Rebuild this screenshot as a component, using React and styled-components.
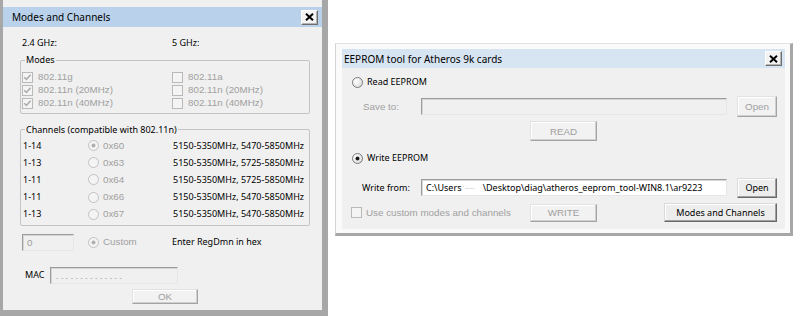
import React from "react";
import styled, { createGlobalStyle } from "styled-components";

const UI = `"Noto Sans", "Open Sans", sans-serif`;
const CLASSIC = `"Liberation Sans", Arial, sans-serif`;
const GRAY = "#a0a0a0";

const GlobalStyle = createGlobalStyle`
  html, body { margin: 0; padding: 0; background: #fff; }
  body { font-family: ${UI}; color: #000; }
  * { box-sizing: border-box; }
`;

const Page = styled.div`
  display: flex;
  align-items: flex-start;
  width: 800px;
  height: 325px;
  overflow: hidden;
`;

const LeftWindow = styled.div`
  flex: none;
  width: 328px;
  height: 316px;
  background: #f0f0f0;
  border-left: 3px solid #a7a7a7;
  border-right: 6px solid #a7a7a7;
  border-bottom: 6px solid #a7a7a7;
  padding-top: 7px;
  display: flex;
  flex-direction: column;
`;

const RightWindow = styled.div`
  flex: none;
  margin: 43px 0 0 7px;
  width: 458px;
  height: 193px;
  background: #fafafa;
  border-left: 1px solid #d4d4d4;
  border-top: 1px solid #e2e2e2;
  border-right: 3px solid #a7a7a7;
  border-bottom: 3px solid #a7a7a7;
  padding: 5px 5px 4px 6px;
  display: flex;
  flex-direction: column;
`;

const TitleBar = styled.div`
  flex: none;
  height: ${(p) => p.$h}px;
  background: ${(p) => (p.$active ? "#b9d1ea" : "#d7e4f2")};
  display: flex;
  align-items: center;
  justify-content: space-between;
  padding: 0 ${(p) => p.$pr}px 0 ${(p) => p.$pl}px;
  font: 10px/14px ${UI};
  color: #000;
`;

const CloseButton = styled.div`
  width: 17px;
  height: 15px;
  display: flex;
  align-items: center;
  justify-content: center;
  background: #f3f3f3;
  border: 1px solid;
  border-color: #ffffff #6e6e6e #6e6e6e #ffffff;
  box-shadow: inset -1px -1px #b4b4b4;
`;

const CloseIcon = () => (
  <svg width="9" height="8" viewBox="0 0 9 8">
    <path d="M1 0.8 L8 7.2 M8 0.8 L1 7.2" stroke="#000" strokeWidth="2" fill="none" />
  </svg>
);

const CheckBoxIcon = ({ checked, disabled }) => (
  <svg width="11" height="11" viewBox="0 0 11 11" style={{ flex: "none" }}>
    <rect
      x="0.5"
      y="0.5"
      width="10"
      height="10"
      fill={disabled ? "#f4f4f4" : "#fff"}
      stroke={disabled ? "#b9b9b9" : "#8e8f8f"}
    />
    {checked && (
      <path
        d="M2.3 5.2 L4.4 7.4 L8.6 2.8"
        fill="none"
        stroke={disabled ? "#a9a9a9" : "#333"}
        strokeWidth="1.5"
      />
    )}
  </svg>
);

const RadioIcon = ({ checked, disabled }) => (
  <svg width="11" height="11" viewBox="0 0 11 11" style={{ flex: "none" }}>
    <defs>
      <radialGradient id="rg" cx="0.35" cy="0.35" r="0.8">
        <stop offset="0" stopColor="#ffffff" />
        <stop offset="1" stopColor="#d8d8d8" />
      </radialGradient>
    </defs>
    <circle
      cx="5.5"
      cy="5.5"
      r="5"
      fill={disabled ? "#f4f4f4" : "url(#rg)"}
      stroke={disabled ? "#c0c0c0" : "#7a7a7a"}
    />
    {checked && <circle cx="5.5" cy="5.5" r="2" fill={disabled ? "#b0b0b0" : "#1c1c1c"} />}
  </svg>
);

/* ---------- shared controls ---------- */

const TextBox = styled.div`
  flex: none;
  width: ${(p) => p.$w}px;
  height: ${(p) => p.$h}px;
  border: 1px solid;
  border-color: #9c9c9c #e6e6e6 #e6e6e6 #9c9c9c;
  box-shadow: inset 1px 1px #d6d6d6;
  background: ${(p) => (p.$disabled ? "#f0f0f0" : "#fff")};
  display: flex;
  align-items: center;
  padding-left: ${(p) => p.$pl ?? 4}px;
  overflow: hidden;
  white-space: nowrap;
  font: ${(p) => (p.$classic ? `9.8px ${CLASSIC}` : `9px ${UI}`)};
  color: ${(p) => (p.$disabled ? GRAY : "#000")};
`;

const Button = styled.div`
  flex: none;
  width: ${(p) => p.$w}px;
  height: ${(p) => p.$h}px;
  margin-left: ${(p) => p.$ml ?? 0}px;
  display: flex;
  align-items: center;
  justify-content: center;
  border: 1px solid;
  border-color: ${(p) =>
    p.$disabled ? "#e2e2e2 #a3a3a3 #a3a3a3 #e2e2e2" : "#dadada #6a6a6a #6a6a6a #dadada"};
  box-shadow: ${(p) =>
    p.$disabled ? "inset -1px -1px #d0d0d0, inset 1px 1px #fff" : "inset -1px -1px #a0a0a0, inset 1px 1px #fff"};
  background: ${(p) => (p.$disabled ? "#f2f2f2" : "#ededed")};
  font: ${(p) => (p.$disabled ? `9.8px ${CLASSIC}` : `9px ${UI}`)};
  color: ${(p) => (p.$disabled ? GRAY : "#000")};
  white-space: nowrap;
`;

const ClassicLabel = styled.span`
  font: 9.8px/12px ${CLASSIC};
  color: ${GRAY};
  white-space: nowrap;
`;

const Label = styled.span`
  font: 9px/12px ${UI};
  color: #000;
  white-space: nowrap;
  width: ${(p) => (p.$w ? `${p.$w}px` : "auto")};
  flex: none;
`;

/* ---------- left window ---------- */

const LeftBody = styled.div`
  flex: 1;
  display: flex;
  flex-direction: column;
`;

const BandHeader = styled.div`
  display: grid;
  grid-template-columns: 150px 1fr;
  padding: 9px 0 0 19px;
  font: 9px/14px ${UI};
`;

const Group = styled.fieldset`
  margin: ${(p) => p.$mt}px 0 0 17px;
  width: 290px;
  min-width: 0;
  border: 1px solid #c4c4c4;
  border-radius: 2px;
  padding: ${(p) => p.$pt}px 0 ${(p) => p.$pb}px 1px;
`;

const Legend = styled.legend`
  font: 9px/12px ${UI};
  padding: 0 1px;
  margin-left: 3px;
`;

const CheckGrid = styled.div`
  display: grid;
  grid-template-columns: 150px 1fr;
  grid-auto-rows: 13px;
  align-items: center;
`;

const Option = styled.div`
  display: flex;
  align-items: center;
  gap: ${(p) => p.$gap ?? 5}px;
`;

const ChannelGrid = styled.div`
  display: grid;
  grid-template-columns: 66px 85px 1fr;
  grid-auto-rows: 17.2px;
  align-items: center;
  font: 9px/12px ${UI};
`;

const RangeCell = styled.span`
  padding-left: 1px;
`;

const CustomRow = styled.div`
  display: grid;
  grid-template-columns: 66px 84px 1fr;
  align-items: center;
  height: 17px;
  margin: 8px 0 0 19px;
`;

const MacRow = styled.div`
  display: flex;
  align-items: center;
  gap: 4px;
  height: 17px;
  margin: 16px 0 0 22px;
`;

const MacMask = styled.span`
  font: 7px ${CLASSIC};
  color: #9a9a9a;
  padding-top: 4px;
  letter-spacing: 0.3px;
`;

const OkButton = styled(Button)`
  margin: 5px 0 0 129px;
`;

/* ---------- right window ---------- */

const RightBody = styled.div`
  flex: 1;
  background: #f0f0f0;
  display: flex;
  flex-direction: column;
`;

const RadioRow = styled.div`
  display: flex;
  align-items: center;
  gap: 4px;
  height: 14px;
  margin-top: ${(p) => p.$mt}px;
  padding-left: 10px;
  font: 9px/12px ${UI};
`;

const FileRow = styled.div`
  display: flex;
  align-items: center;
  height: 21px;
  margin-top: ${(p) => p.$mt}px;
  padding-left: ${(p) => p.$pl}px;
`;

const CenterButtonRow = styled.div`
  display: flex;
  margin-top: ${(p) => p.$mt}px;
  padding-left: 188px;
`;

const BottomRow = styled.div`
  display: flex;
  align-items: center;
  height: 19px;
  margin-top: 5px;
  padding-left: 9px;
`;

const CheckArea = styled.div`
  width: 179px;
  flex: none;
  display: flex;
  align-items: center;
  gap: 4px;
`;

const Redacted = styled.span`
  color: #9a9a9a;
  letter-spacing: -0.5px;
  font-size: 6px;
  margin: 0 8px 0 1px;
`;

const channels = [
  ["1-14", "0x60", "5150-5350MHz, 5470-5850MHz", true],
  ["1-13", "0x63", "5150-5350MHz, 5725-5850MHz", false],
  ["1-11", "0x64", "5150-5350MHz, 5725-5850MHz", false],
  ["1-11", "0x66", "5150-5350MHz, 5470-5850MHz", false],
  ["1-13", "0x67", "5150-5350MHz, 5470-5850MHz", false],
];

const modes = [
  ["802.11g", true, "802.11a"],
  ["802.11n (20MHz)", true, "802.11n (20MHz)"],
  ["802.11n (40MHz)", true, "802.11n (40MHz)"],
];

export default function App() {
  return (
    <>
      <GlobalStyle />
      <Page>
        <LeftWindow>
          <TitleBar $active $h={20} $pl={9} $pr={4}>
            <span>Modes and Channels</span>
            <CloseButton>
              <CloseIcon />
            </CloseButton>
          </TitleBar>
          <LeftBody>
            <BandHeader>
              <span>2.4 GHz:</span>
              <span>5 GHz:</span>
            </BandHeader>

            <Group $mt={4} $pt={4.5} $pb={3}>
              <Legend>Modes</Legend>
              <CheckGrid>
                {modes.map(([a, checked, b], i) => (
                  <React.Fragment key={i}>
                    <Option>
                      <CheckBoxIcon checked={checked} disabled />
                      <ClassicLabel>{a}</ClassicLabel>
                    </Option>
                    <Option>
                      <CheckBoxIcon disabled />
                      <ClassicLabel>{b}</ClassicLabel>
                    </Option>
                  </React.Fragment>
                ))}
              </CheckGrid>
            </Group>

            <Group $mt={10} $pt={1.5} $pb={2}>
              <Legend>Channels (compatible with 802.11n)</Legend>
              <ChannelGrid>
                {channels.map(([range, code, freq, sel], i) => (
                  <React.Fragment key={i}>
                    <RangeCell>{range}</RangeCell>
                    <Option $gap={4}>
                      <RadioIcon checked={sel} disabled />
                      <ClassicLabel>{code}</ClassicLabel>
                    </Option>
                    <span>{freq}</span>
                  </React.Fragment>
                ))}
              </ChannelGrid>
            </Group>

            <CustomRow>
              <TextBox $w={52} $h={17} $disabled $classic $pl={4}>
                0
              </TextBox>
              <Option $gap={4}>
                <RadioIcon checked disabled />
                <ClassicLabel>Custom</ClassicLabel>
              </Option>
              <Label>Enter RegDmn in hex</Label>
            </CustomRow>

            <MacRow>
              <Label $w={21}>MAC</Label>
              <TextBox $w={128} $h={17} $disabled $pl={5}>
                <MacMask>- - - - - - - - - - - - - -</MacMask>
              </TextBox>
            </MacRow>

            <OkButton $w={66} $h={15} $disabled>
              OK
            </OkButton>
          </LeftBody>
        </LeftWindow>

        <RightWindow>
          <TitleBar $h={19} $pl={2} $pr={3}>
            <span>EEPROM tool for Atheros 9k cards</span>
            <CloseButton>
              <CloseIcon />
            </CloseButton>
          </TitleBar>
          <RightBody>
            <RadioRow $mt={7}>
              <RadioIcon />
              <span>Read EEPROM</span>
            </RadioRow>
            <FileRow $mt={7} $pl={21}>
              <ClassicLabel style={{ width: 58, flex: "none" }}>Save to:</ClassicLabel>
              <TextBox $w={306} $h={17} $disabled />
              <Button $w={40} $h={21} $ml={10} $disabled>
                Open
              </Button>
            </FileRow>
            <CenterButtonRow $mt={4}>
              <Button $w={67} $h={20} $disabled>
                READ
              </Button>
            </CenterButtonRow>
            <RadioRow $mt={10}>
              <RadioIcon checked />
              <span>Write EEPROM</span>
            </RadioRow>
            <FileRow $mt={12} $pl={20}>
              <Label $w={59}>Write from:</Label>
              <TextBox $w={306} $h={17}>
                C:\Users
                <Redacted>` ·········</Redacted>
                \Desktop\diag\atheros_eeprom_tool-WIN8.1\ar9223
              </TextBox>
              <Button $w={40} $h={20} $ml={10}>
                Open
              </Button>
            </FileRow>
            <BottomRow>
              <CheckArea>
                <CheckBoxIcon disabled />
                <ClassicLabel>Use custom modes and channels</ClassicLabel>
              </CheckArea>
              <Button $w={67} $h={18} $disabled>
                WRITE
              </Button>
              <Button $w={113} $h={19} $ml={67}>
                Modes and Channels
              </Button>
            </BottomRow>
          </RightBody>
        </RightWindow>
      </Page>
    </>
  );
}
